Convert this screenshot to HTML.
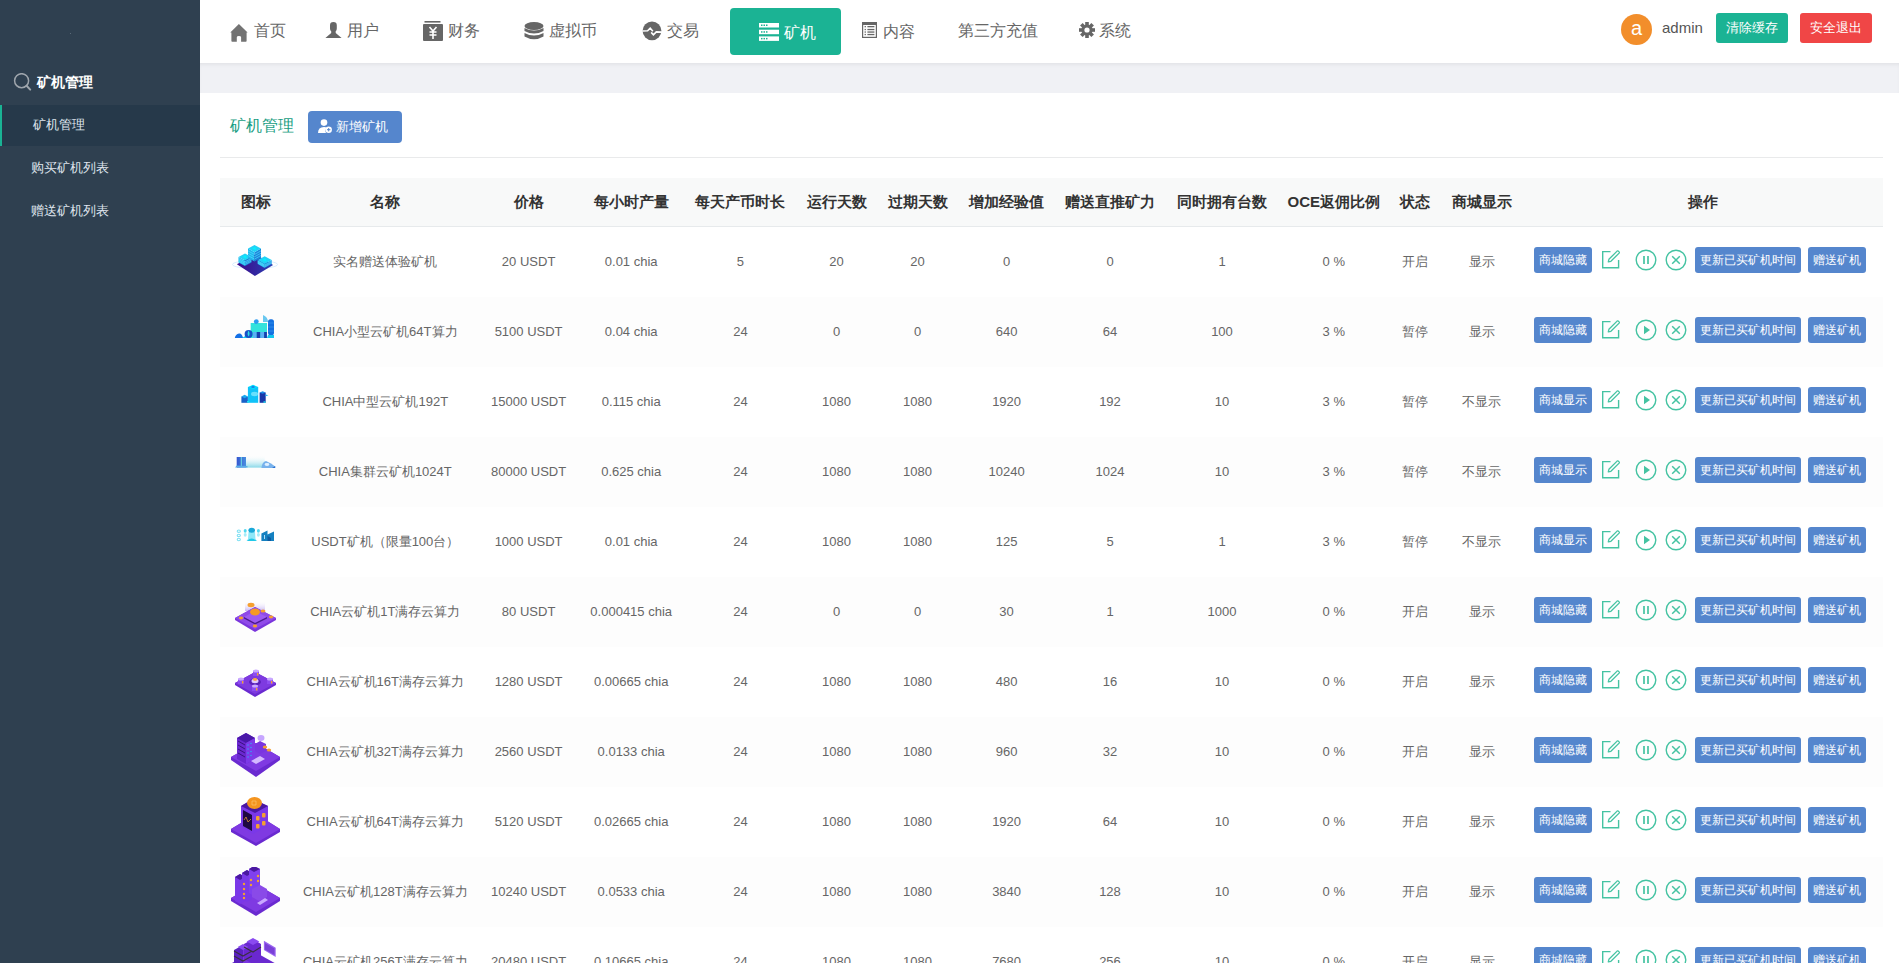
<!DOCTYPE html>
<html><head><meta charset="utf-8">
<style>
*{margin:0;padding:0;box-sizing:border-box}
html,body{width:1899px;height:963px;overflow:hidden;background:#fff;font-family:"Liberation Sans",sans-serif;}
#side{position:absolute;left:0;top:0;width:200px;height:963px;background:#2f4050;}
#side .hd{position:absolute;left:0;top:62px;width:200px;height:40px;color:#fff;font-weight:bold;font-size:14px;}
#side .hd svg{position:absolute;left:13px;top:11px}
#side .hd span{position:absolute;left:37px;top:11px;line-height:18px}
#side .it{position:absolute;left:0;width:200px;height:41px;color:#dfe4ed;font-size:13px;}
#side .it span{position:absolute;top:12px;line-height:16px}
#side .act{background:#26394a;border-left:2px solid #1ab394}
#top{position:absolute;left:200px;top:0;width:1699px;height:63px;background:#fff;}
#band{position:absolute;left:200px;top:63px;width:1699px;height:30px;background:#f0f1f5;box-shadow:inset 0 3px 4px -2px rgba(0,0,0,.08)}
.nv{position:absolute;top:22px;height:20px;color:#666;font-size:16px;line-height:18px;white-space:nowrap}
.nv svg{position:absolute;}
.nv span{position:absolute;top:0}
#act{position:absolute;left:730px;top:8px;width:111px;height:47px;background:#1bb394;border-radius:4px}
#avatar{position:absolute;left:1621px;top:14px;width:31px;height:31px;border-radius:50%;background:#f28e2b;color:#fff;font-size:20px;line-height:28px;text-align:center}
#uname{position:absolute;left:1662px;top:18px;color:#555;font-size:15px;line-height:20px}
.tbtn{position:absolute;top:13px;width:72px;height:30px;border-radius:3px;color:#fff;font-size:13px;line-height:30px;text-align:center}

#content{position:absolute;left:200px;top:93px;width:1699px;height:870px;background:#fff}
#ttl{position:absolute;left:230px;top:116px;color:#179d82;font-size:16px;line-height:20px}
#addbtn{position:absolute;left:308px;top:111px;width:94px;height:32px;background:#5586cd;border-radius:4px;color:#fff;font-size:13px;line-height:32px}
#addbtn span{position:absolute;left:28px;top:0}
#addbtn svg{position:absolute;left:10px;top:8px}
#hline{position:absolute;left:220px;top:157px;width:1663px;height:1px;background:#e9eaeb}
#thead{position:absolute;left:220px;top:178px;width:1663px;height:48px;background:#f8f9f9;border-bottom:1px solid #e7eaec;box-sizing:content-box}
.th{position:absolute;top:193px;width:300px;text-align:center;color:#333;font-weight:bold;font-size:15px;line-height:18px;white-space:nowrap}
.row{position:absolute;left:220px;width:1663px;height:70px}
.row.s{background:#fdfdfd}
.td{position:absolute;width:300px;text-align:center;color:#666;font-size:13px;line-height:18px;white-space:nowrap}
.ab{position:absolute;height:26px;background:#5586cd;border-radius:3px;color:#fff;font-size:12px;line-height:26px;text-align:center;white-space:nowrap}
.ic{position:absolute}
</style></head><body>

<div id="side"><div style="position:absolute;left:70px;top:33px;width:1px;height:1px;background:#5a6a78"></div>
  <div class="hd"><svg width="20" height="20" viewBox="0 0 20 20"><circle cx="8.6" cy="7.7" r="7" fill="none" stroke="#9fa6ad" stroke-width="1.5"/><line x1="13.6" y1="12.8" x2="17.2" y2="16.6" stroke="#9fa6ad" stroke-width="2" stroke-linecap="round"/></svg><span>矿机管理</span></div>
  <div class="it act" style="top:105px"><span style="left:31px">矿机管理</span></div>
  <div class="it" style="top:148px"><span style="left:31px">购买矿机列表</span></div>
  <div class="it" style="top:191px"><span style="left:31px">赠送矿机列表</span></div>
</div>

<div id="top">
</div>
<div id="act"></div>
<div class="nv" style="left:230px"><svg style="left:0;top:2px" width="18" height="18" viewBox="0 0 18 18"><path d="M8.9 0 L17.6 8.5 L16.6 8.5 L16.6 16.9 Q16.6 17.7 15.8 17.7 L11.1 17.7 L11.1 13.2 Q11.1 11.9 8.95 11.9 Q6.8 11.9 6.8 13.2 L6.8 17.7 L2.2 17.7 Q1.4 17.7 1.4 16.9 L1.4 8.5 L0.3 8.5 Z" fill="#737373"/></svg><span style="left:24px">首页</span></div>
<div class="nv" style="left:325px"><svg style="left:0;top:0" width="17" height="17" viewBox="0 0 17 17"><path d="M5 3.2 Q5 0 8.4 0 Q11.8 0 11.8 3.2 L11.8 6.5 Q11.8 8.6 10.7 9.2 L10.7 11 L16.6 15.9 L0.4 15.9 L6.2 11 L6.2 9.2 Q5 8.6 5 6.5 Z" fill="#666"/></svg><span style="left:22px">用户</span></div>
<div class="nv" style="left:423px"><svg style="left:0;top:-1px" width="20" height="20" viewBox="0 0 20 20"><rect x="1.5" y="0" width="16" height="1.6" fill="#666"/><rect x="0" y="3" width="20" height="17" rx="1" fill="#666"/><path d="M6.5 6 L10 10 L13.5 6 M6.5 11 H13.5 M6.5 14 H13.5 M10 10 V18" stroke="#fff" stroke-width="1.6" fill="none"/></svg><span style="left:25px">财务</span></div>
<div class="nv" style="left:524px"><svg style="left:0;top:0" width="20" height="19" viewBox="0 0 20 19"><ellipse cx="10" cy="4" rx="9.5" ry="4" fill="#666"/><path d="M0.5 6 Q10 11 19.5 6 V9 Q10 14 0.5 9 Z" fill="#666"/><path d="M0.5 11 Q10 16 19.5 11 V14.5 Q10 20 0.5 14.5 Z" fill="#666"/></svg><span style="left:25px">虚拟币</span></div>
<div class="nv" style="left:642px"><svg style="left:0;top:-1px" width="20" height="20" viewBox="0 0 20 20"><circle cx="10" cy="9.8" r="9.4" fill="#666"/><path d="M0.3 10 L5.6 9.8 L8.2 7.2 L10.9 10.2 M9.2 11.4 L11.4 13.8 L14.3 10.9 L19.8 11.1" stroke="#fff" stroke-width="1.6" fill="none"/></svg><span style="left:25px">交易</span></div>
<div class="nv" style="left:759px;color:#fff"><svg style="left:0;top:1px" width="20" height="18" viewBox="0 0 20 18"><rect x="0" y="0" width="20" height="4.5" fill="#fff"/><rect x="0" y="6.7" width="20" height="4.5" fill="#fff"/><rect x="0" y="13.4" width="20" height="4.5" fill="#fff"/><g fill="#1bb394"><rect x="2" y="1.5" width="1.5" height="1.5"/><rect x="4.5" y="1.5" width="1.5" height="1.5"/><rect x="7" y="1.5" width="1.5" height="1.5"/><rect x="2" y="8.2" width="1.5" height="1.5"/><rect x="4.5" y="8.2" width="1.5" height="1.5"/><rect x="7" y="8.2" width="1.5" height="1.5"/><rect x="2" y="14.9" width="1.5" height="1.5"/><rect x="4.5" y="14.9" width="1.5" height="1.5"/><rect x="7" y="14.9" width="1.5" height="1.5"/></g></svg><span style="left:25px;top:2px">矿机</span></div>
<div class="nv" style="left:862px"><svg style="left:0;top:0" width="15" height="16" viewBox="0 0 15 16"><rect x="0.6" y="0.6" width="13.8" height="14.8" fill="none" stroke="#666" stroke-width="1.2"/><rect x="0" y="0" width="15" height="3" fill="#666"/><rect x="2.6" y="3.9999999999999996" width="1.3" height="1.3" fill="#666"/><rect x="5.4" y="3.9999999999999996" width="7" height="1.3" fill="#666"/><rect x="2.6" y="6.9" width="1.3" height="1.3" fill="#666"/><rect x="5.4" y="6.9" width="7" height="1.3" fill="#666"/><rect x="2.6" y="9.4" width="1.3" height="1.3" fill="#666"/><rect x="5.4" y="9.4" width="7" height="1.3" fill="#666"/><rect x="2.6" y="11.9" width="1.3" height="1.3" fill="#666"/><rect x="5.4" y="11.9" width="7" height="1.3" fill="#666"/></svg><span style="left:21px;top:1px">内容</span></div>
<div class="nv" style="left:958px"><span style="left:0">第三方充值</span></div>
<div class="nv" style="left:1079px"><svg style="left:0;top:0" width="16" height="16" viewBox="0 0 16 16"><g transform="translate(8 8)" fill="#666"><circle r="5.6"/><rect x="-1.8" y="-8" width="3.6" height="16"/><rect x="-1.8" y="-8" width="3.6" height="16" transform="rotate(45)"/><rect x="-1.8" y="-8" width="3.6" height="16" transform="rotate(90)"/><rect x="-1.8" y="-8" width="3.6" height="16" transform="rotate(135)"/></g><circle cx="8" cy="8" r="2.6" fill="#fff"/></svg><span style="left:20px">系统</span></div>
<div id="avatar">a</div>
<div id="uname">admin</div>
<div class="tbtn" style="left:1716px;background:#1bb394">清除缓存</div>
<div class="tbtn" style="left:1800px;background:#f04646">安全退出</div>

<div id="band"></div>

<div id="content"></div>
<div id="ttl">矿机管理</div>
<div id="addbtn"><svg width="14" height="14" viewBox="0 0 14 14"><circle cx="6" cy="3.6" r="3.3" fill="#fff"/><path d="M0 14 Q0 8 6 8 Q8 8 9 9 A4 4 0 0 0 8 14Z" fill="#fff"/><circle cx="10.7" cy="10.7" r="3.2" fill="#fff"/><path d="M9 10.7 H12.4 M10.7 9 V12.4" stroke="#5586cd" stroke-width="1"/></svg><span>新增矿机</span></div>
<div id="hline"></div>
<div id="thead"></div>
<div class="th" style="left:105.5px">图标</div>
<div class="th" style="left:235.3px">名称</div>
<div class="th" style="left:378.6px">价格</div>
<div class="th" style="left:481.20000000000005px">每小时产量</div>
<div class="th" style="left:590.4px">每天产币时长</div>
<div class="th" style="left:686.5px">运行天数</div>
<div class="th" style="left:767.5px">过期天数</div>
<div class="th" style="left:856.6px">增加经验值</div>
<div class="th" style="left:960px">赠送直推矿力</div>
<div class="th" style="left:1072px">同时拥有台数</div>
<div class="th" style="left:1183.8px">OCE返佣比例</div>
<div class="th" style="left:1265.3px">状态</div>
<div class="th" style="left:1331.6px">商城显示</div>
<div class="th" style="left:1552.5px">操作</div>
<div class="row" style="top:227px"></div>
<svg style="position:absolute;left:230px;top:244px" width="50" height="34" viewBox="0 0 50 34"><defs><linearGradient id="p1" x1="0" y1="0" x2="1" y2="0"><stop offset="0" stop-color="#3c0a8a"/><stop offset="1" stop-color="#2a40b4"/></linearGradient></defs><ellipse cx="25" cy="20.5" rx="22.5" ry="4" fill="none" stroke="#cfe9ff" stroke-width="0.8"/><path d="M6.9 20.2 L24.9 31.9 L43.1 21.1 L25 10 Z" fill="url(#p1)"/><path d="M8.5 12.975000000000001 L15 16.55 L15 22 L8.5 18.425 Z" fill="#1fb6ee"/><path d="M15 16.55 L21.5 12.975000000000001 L21.5 18.425 L15 22 Z" fill="#1a86dc"/><path d="M8.5 14.337500000000002 L15 17.9125 L21.5 14.337500000000002" fill="none" stroke="#5fe6ff" stroke-width="0.7" opacity=".8"/><path d="M8.5 15.700000000000001 L15 19.275 L21.5 15.700000000000001" fill="none" stroke="#5fe6ff" stroke-width="0.7" opacity=".8"/><path d="M8.5 17.0625 L15 20.6375 L21.5 17.0625" fill="none" stroke="#5fe6ff" stroke-width="0.7" opacity=".8"/><path d="M8.5 12.975000000000001 L15 9.4 L21.5 12.975000000000001 L15 16.55 Z" fill="#22d2f6"/><path d="M12.725 12.975000000000001 L15.65 11.36625 L16.625 14.405000000000001 Z" fill="#00f4ff"/><path d="M18.0 4.575 L24.5 8.15 L24.5 17.4 L18.0 13.825 Z" fill="#1fb6ee"/><path d="M24.5 8.15 L31.0 4.575 L31.0 13.825 L24.5 17.4 Z" fill="#1a86dc"/><path d="M18.0 6.887499999999999 L24.5 10.4625 L31.0 6.887499999999999" fill="none" stroke="#5fe6ff" stroke-width="0.7" opacity=".8"/><path d="M18.0 9.2 L24.5 12.774999999999999 L31.0 9.2" fill="none" stroke="#5fe6ff" stroke-width="0.7" opacity=".8"/><path d="M18.0 11.5125 L24.5 15.087499999999999 L31.0 11.5125" fill="none" stroke="#5fe6ff" stroke-width="0.7" opacity=".8"/><path d="M18.0 4.575 L24.5 1 L31.0 4.575 L24.5 8.15 Z" fill="#22d2f6"/><path d="M22.225 4.575 L25.15 2.9662500000000005 L26.125 6.005000000000001 Z" fill="#00f4ff"/><path d="M27.700000000000003 16.05 L34.7 19.9 L34.7 23.9 L27.700000000000003 20.049999999999997 Z" fill="#1fb6ee"/><path d="M34.7 19.9 L41.7 16.05 L41.7 20.049999999999997 L34.7 23.9 Z" fill="#1a86dc"/><path d="M27.700000000000003 17.05 L34.7 20.9 L41.7 17.05" fill="none" stroke="#5fe6ff" stroke-width="0.7" opacity=".8"/><path d="M27.700000000000003 18.05 L34.7 21.9 L41.7 18.05" fill="none" stroke="#5fe6ff" stroke-width="0.7" opacity=".8"/><path d="M27.700000000000003 19.05 L34.7 22.9 L41.7 19.05" fill="none" stroke="#5fe6ff" stroke-width="0.7" opacity=".8"/><path d="M27.700000000000003 16.05 L34.7 12.2 L41.7 16.05 L34.7 19.9 Z" fill="#22d2f6"/><path d="M32.25 16.05 L35.400000000000006 14.317499999999999 L36.45 17.59 Z" fill="#00f4ff"/></svg>
<div class="td" style="left:235.3px;top:253px">实名赠送体验矿机</div>
<div class="td" style="left:378.6px;top:253px">20 USDT</div>
<div class="td" style="left:481.20000000000005px;top:253px">0.01 chia</div>
<div class="td" style="left:590.4px;top:253px">5</div>
<div class="td" style="left:686.5px;top:253px">20</div>
<div class="td" style="left:767.5px;top:253px">20</div>
<div class="td" style="left:856.6px;top:253px">0</div>
<div class="td" style="left:960px;top:253px">0</div>
<div class="td" style="left:1072px;top:253px">1</div>
<div class="td" style="left:1183.8px;top:253px">0 %</div>
<div class="td" style="left:1265.3px;top:253px">开启</div>
<div class="td" style="left:1331.6px;top:253px">显示</div>
<div class="ab" style="left:1534px;top:247px;width:58px">商城隐藏</div>
<svg class="ic" style="left:1601px;top:250px" width="19" height="19" viewBox="0 0 19 19"><path d="M9.5 1.6 H1.7 V17.8 H17.6 V10" fill="none" stroke="#45c3a2" stroke-width="1.4"/><path d="M7.3 11.8 L7.9 9.3 L16.1 1.1 Q16.7 0.6 17.3 1.1 L18.1 1.9 Q18.6 2.5 18.1 3.1 L9.9 11.3 Z" fill="none" stroke="#45c3a2" stroke-width="1.3" stroke-linejoin="round"/></svg>
<svg class="ic" style="left:1635px;top:249px" width="22" height="22" viewBox="0 0 22 22"><circle cx="11" cy="11" r="9.8" fill="none" stroke="#45c3a2" stroke-width="1.4"/><path d="M9 7 V15 M13 7 V15" stroke="#45c3a2" stroke-width="1.7"/></svg>
<svg class="ic" style="left:1665px;top:249px" width="22" height="22" viewBox="0 0 22 22"><circle cx="11" cy="11" r="9.8" fill="none" stroke="#45c3a2" stroke-width="1.4"/><path d="M7.2 7.2 L14.8 14.8 M14.8 7.2 L7.2 14.8" stroke="#45c3a2" stroke-width="1.5"/></svg>
<div class="ab" style="left:1695px;top:247px;width:106px">更新已买矿机时间</div>
<div class="ab" style="left:1808px;top:247px;width:58px">赠送矿机</div>
<div class="row s" style="top:297px"></div>
<svg style="position:absolute;left:234px;top:314px" width="42" height="26" viewBox="0 0 42 26"><path d="M8 24 L33 24 L33 10 Q30 14 24 14 Z" fill="#14c8ee"/>
<path d="M0.8 24 Q1.5 20 5 19.5 Q8 19 9 24 Z" fill="#1470e6"/>
<rect x="16.7" y="9" width="16.3" height="15" fill="#34e2dc"/>
<circle cx="22.3" cy="7.6" r="2.4" fill="#2f9cf0"/>
<circle cx="14.6" cy="20" r="4" fill="#1850c8"/><path d="M14.6 16.5 Q16.5 20 14.6 22.5 Q12.7 20 14.6 16.5Z" fill="#30dce0"/>
<rect x="19" y="18" width="3.7" height="6" fill="#5ab0f5"/><rect x="22.7" y="18" width="3.7" height="6" fill="#1840b0"/><rect x="26.4" y="18" width="3.7" height="6" fill="#5ab0f5"/><rect x="30.1" y="18" width="2.8" height="6" fill="#1840b0"/>
<path d="M29 1 Q34 3 34 8 L29 8 Z" fill="#6ac8f0"/>
<rect x="34" y="5.2" width="6" height="16" rx="2.5" fill="#1470e0"/><path d="M34 9 H40 M34 13 H40 M34 17 H40" stroke="#3aa0f0" stroke-width=".6"/>
<path d="M33 24 L40 24 L40 21 L34 21 Z" fill="#12c6ee"/></svg>
<div class="td" style="left:235.3px;top:323px">CHIA小型云矿机64T算力</div>
<div class="td" style="left:378.6px;top:323px">5100 USDT</div>
<div class="td" style="left:481.20000000000005px;top:323px">0.04 chia</div>
<div class="td" style="left:590.4px;top:323px">24</div>
<div class="td" style="left:686.5px;top:323px">0</div>
<div class="td" style="left:767.5px;top:323px">0</div>
<div class="td" style="left:856.6px;top:323px">640</div>
<div class="td" style="left:960px;top:323px">64</div>
<div class="td" style="left:1072px;top:323px">100</div>
<div class="td" style="left:1183.8px;top:323px">3 %</div>
<div class="td" style="left:1265.3px;top:323px">暂停</div>
<div class="td" style="left:1331.6px;top:323px">显示</div>
<div class="ab" style="left:1534px;top:317px;width:58px">商城隐藏</div>
<svg class="ic" style="left:1601px;top:320px" width="19" height="19" viewBox="0 0 19 19"><path d="M9.5 1.6 H1.7 V17.8 H17.6 V10" fill="none" stroke="#45c3a2" stroke-width="1.4"/><path d="M7.3 11.8 L7.9 9.3 L16.1 1.1 Q16.7 0.6 17.3 1.1 L18.1 1.9 Q18.6 2.5 18.1 3.1 L9.9 11.3 Z" fill="none" stroke="#45c3a2" stroke-width="1.3" stroke-linejoin="round"/></svg>
<svg class="ic" style="left:1635px;top:319px" width="22" height="22" viewBox="0 0 22 22"><circle cx="11" cy="11" r="9.8" fill="none" stroke="#45c3a2" stroke-width="1.4"/><path d="M9 6.8 L15 11 L9 15.2 Z" fill="#45c3a2"/></svg>
<svg class="ic" style="left:1665px;top:319px" width="22" height="22" viewBox="0 0 22 22"><circle cx="11" cy="11" r="9.8" fill="none" stroke="#45c3a2" stroke-width="1.4"/><path d="M7.2 7.2 L14.8 14.8 M14.8 7.2 L7.2 14.8" stroke="#45c3a2" stroke-width="1.5"/></svg>
<div class="ab" style="left:1695px;top:317px;width:106px">更新已买矿机时间</div>
<div class="ab" style="left:1808px;top:317px;width:58px">赠送矿机</div>
<div class="row" style="top:367px"></div>
<svg style="position:absolute;left:240px;top:384px" width="29" height="20" viewBox="0 0 29 20"><rect x="1.4" y="12.5" width="6.5" height="6.3" fill="#1a62c8"/><path d="M1.4 12.5 L4.6 10.8 L7.9 12.5 L4.6 14.2Z" fill="#1aa8f0"/>
<rect x="7.9" y="3" width="10.3" height="15.8" fill="#10c2f8"/><path d="M7.9 3 L13 0.8 L18.2 3 L13 5.2Z" fill="#00dcff"/><ellipse cx="13" cy="2.9" rx="1.8" ry="1" fill="#1a80e8"/>
<ellipse cx="14.5" cy="10" rx="3.5" ry="2.2" fill="#90ecff" opacity=".7"/>
<rect x="19.6" y="8.5" width="6.1" height="10.3" fill="#1a38a8"/><path d="M19.6 8.5 L22.6 7.2 L25.7 8.5 L22.6 9.8Z" fill="#1a8ae8"/><path d="M25.5 10.5 L28.5 11.3 L25.5 12.3Z" fill="#19b8f0"/>
<rect x="7" y="17" width="2" height="1.5" fill="#20e0f0"/><rect x="23.5" y="17.3" width="2" height="1.5" fill="#20e0f0"/></svg>
<div class="td" style="left:235.3px;top:393px">CHIA中型云矿机192T</div>
<div class="td" style="left:378.6px;top:393px">15000 USDT</div>
<div class="td" style="left:481.20000000000005px;top:393px">0.115 chia</div>
<div class="td" style="left:590.4px;top:393px">24</div>
<div class="td" style="left:686.5px;top:393px">1080</div>
<div class="td" style="left:767.5px;top:393px">1080</div>
<div class="td" style="left:856.6px;top:393px">1920</div>
<div class="td" style="left:960px;top:393px">192</div>
<div class="td" style="left:1072px;top:393px">10</div>
<div class="td" style="left:1183.8px;top:393px">3 %</div>
<div class="td" style="left:1265.3px;top:393px">暂停</div>
<div class="td" style="left:1331.6px;top:393px">不显示</div>
<div class="ab" style="left:1534px;top:387px;width:58px">商城显示</div>
<svg class="ic" style="left:1601px;top:390px" width="19" height="19" viewBox="0 0 19 19"><path d="M9.5 1.6 H1.7 V17.8 H17.6 V10" fill="none" stroke="#45c3a2" stroke-width="1.4"/><path d="M7.3 11.8 L7.9 9.3 L16.1 1.1 Q16.7 0.6 17.3 1.1 L18.1 1.9 Q18.6 2.5 18.1 3.1 L9.9 11.3 Z" fill="none" stroke="#45c3a2" stroke-width="1.3" stroke-linejoin="round"/></svg>
<svg class="ic" style="left:1635px;top:389px" width="22" height="22" viewBox="0 0 22 22"><circle cx="11" cy="11" r="9.8" fill="none" stroke="#45c3a2" stroke-width="1.4"/><path d="M9 6.8 L15 11 L9 15.2 Z" fill="#45c3a2"/></svg>
<svg class="ic" style="left:1665px;top:389px" width="22" height="22" viewBox="0 0 22 22"><circle cx="11" cy="11" r="9.8" fill="none" stroke="#45c3a2" stroke-width="1.4"/><path d="M7.2 7.2 L14.8 14.8 M14.8 7.2 L7.2 14.8" stroke="#45c3a2" stroke-width="1.5"/></svg>
<div class="ab" style="left:1695px;top:387px;width:106px">更新已买矿机时间</div>
<div class="ab" style="left:1808px;top:387px;width:58px">赠送矿机</div>
<div class="row s" style="top:437px"></div>
<svg style="position:absolute;left:234px;top:455px" width="42" height="14" viewBox="0 0 42 14"><defs><linearGradient id="g4" x1="0" y1="0" x2="0" y2="1"><stop offset="0" stop-color="#fff" stop-opacity="0"/><stop offset="1" stop-color="#88d8e8"/></linearGradient>
<linearGradient id="b4" x1="0" y1="0" x2="1" y2="0"><stop offset="0" stop-color="#3456d0"/><stop offset="1" stop-color="#4a90e0"/></linearGradient></defs>
<rect x="12" y="0" width="18.7" height="12.6" fill="url(#g4)"/>
<rect x="2.7" y="2" width="9.3" height="10.6" fill="url(#b4)"/><rect x="6.8" y="2" width="1" height="10.6" fill="#70e0e0"/>
<path d="M1 12.6 L2.7 10.5 L13.5 11 L13.5 12.6Z" fill="#5aaee8"/>
<path d="M27.4 12.9 Q28 7 32 6 L37 8.5 L41.2 11.5 L41.2 12.9Z" fill="#78b2ec"/><ellipse cx="33" cy="9.5" rx="2.4" ry="1.4" fill="#e0f0ff"/><path d="M38 12.9 L41.2 11 L41.2 12.9Z" fill="#2a70d0"/></svg>
<div class="td" style="left:235.3px;top:463px">CHIA集群云矿机1024T</div>
<div class="td" style="left:378.6px;top:463px">80000 USDT</div>
<div class="td" style="left:481.20000000000005px;top:463px">0.625 chia</div>
<div class="td" style="left:590.4px;top:463px">24</div>
<div class="td" style="left:686.5px;top:463px">1080</div>
<div class="td" style="left:767.5px;top:463px">1080</div>
<div class="td" style="left:856.6px;top:463px">10240</div>
<div class="td" style="left:960px;top:463px">1024</div>
<div class="td" style="left:1072px;top:463px">10</div>
<div class="td" style="left:1183.8px;top:463px">3 %</div>
<div class="td" style="left:1265.3px;top:463px">暂停</div>
<div class="td" style="left:1331.6px;top:463px">不显示</div>
<div class="ab" style="left:1534px;top:457px;width:58px">商城显示</div>
<svg class="ic" style="left:1601px;top:460px" width="19" height="19" viewBox="0 0 19 19"><path d="M9.5 1.6 H1.7 V17.8 H17.6 V10" fill="none" stroke="#45c3a2" stroke-width="1.4"/><path d="M7.3 11.8 L7.9 9.3 L16.1 1.1 Q16.7 0.6 17.3 1.1 L18.1 1.9 Q18.6 2.5 18.1 3.1 L9.9 11.3 Z" fill="none" stroke="#45c3a2" stroke-width="1.3" stroke-linejoin="round"/></svg>
<svg class="ic" style="left:1635px;top:459px" width="22" height="22" viewBox="0 0 22 22"><circle cx="11" cy="11" r="9.8" fill="none" stroke="#45c3a2" stroke-width="1.4"/><path d="M9 6.8 L15 11 L9 15.2 Z" fill="#45c3a2"/></svg>
<svg class="ic" style="left:1665px;top:459px" width="22" height="22" viewBox="0 0 22 22"><circle cx="11" cy="11" r="9.8" fill="none" stroke="#45c3a2" stroke-width="1.4"/><path d="M7.2 7.2 L14.8 14.8 M14.8 7.2 L7.2 14.8" stroke="#45c3a2" stroke-width="1.5"/></svg>
<div class="ab" style="left:1695px;top:457px;width:106px">更新已买矿机时间</div>
<div class="ab" style="left:1808px;top:457px;width:58px">赠送矿机</div>
<div class="row" style="top:507px"></div>
<svg style="position:absolute;left:236px;top:527px" width="38" height="15" viewBox="0 0 38 15"><g fill="none" stroke="#7fe0f3" stroke-width="1.1"><ellipse cx="2.8" cy="4.2" rx="1.6" ry="1.2"/><ellipse cx="2.8" cy="8.4" rx="1.6" ry="1.2"/><ellipse cx="2.8" cy="12.5" rx="1.6" ry="1.2"/></g>
<g fill="#52d8f0"><ellipse cx="9.2" cy="3.8" rx="1.5" ry="1.9"/><ellipse cx="22.4" cy="3.8" rx="1.5" ry="1.9"/></g>
<g fill="#a6ecf8"><ellipse cx="9.2" cy="7.8" rx="1.5" ry="1.9"/><ellipse cx="22.4" cy="7.8" rx="1.5" ry="1.9"/></g>
<path d="M12.5 5 L19 5 L19.5 12 L21 13.9 L10.5 13.9 L12 12Z" fill="#8ee8f8"/><path d="M11 13.9 Q15.7 9 20.5 13.9Z" fill="#20c8e8"/>
<ellipse cx="15.7" cy="3.2" rx="3.3" ry="2.5" fill="#1aa8d8"/>
<path d="M25.4 6.5 L31.5 3.6 L31.5 7.5 L38 4.5 L38 13.9 L25.4 13.9Z" fill="#1480c0"/><rect x="28" y="8" width="0.9" height="4" fill="#bfe8ff"/><path d="M31.5 13.9 L31.5 9 L35 11 L35 13.9Z" fill="#0e5aa0"/></svg>
<div class="td" style="left:235.3px;top:533px">USDT矿机（限量100台）</div>
<div class="td" style="left:378.6px;top:533px">1000 USDT</div>
<div class="td" style="left:481.20000000000005px;top:533px">0.01 chia</div>
<div class="td" style="left:590.4px;top:533px">24</div>
<div class="td" style="left:686.5px;top:533px">1080</div>
<div class="td" style="left:767.5px;top:533px">1080</div>
<div class="td" style="left:856.6px;top:533px">125</div>
<div class="td" style="left:960px;top:533px">5</div>
<div class="td" style="left:1072px;top:533px">1</div>
<div class="td" style="left:1183.8px;top:533px">3 %</div>
<div class="td" style="left:1265.3px;top:533px">暂停</div>
<div class="td" style="left:1331.6px;top:533px">不显示</div>
<div class="ab" style="left:1534px;top:527px;width:58px">商城显示</div>
<svg class="ic" style="left:1601px;top:530px" width="19" height="19" viewBox="0 0 19 19"><path d="M9.5 1.6 H1.7 V17.8 H17.6 V10" fill="none" stroke="#45c3a2" stroke-width="1.4"/><path d="M7.3 11.8 L7.9 9.3 L16.1 1.1 Q16.7 0.6 17.3 1.1 L18.1 1.9 Q18.6 2.5 18.1 3.1 L9.9 11.3 Z" fill="none" stroke="#45c3a2" stroke-width="1.3" stroke-linejoin="round"/></svg>
<svg class="ic" style="left:1635px;top:529px" width="22" height="22" viewBox="0 0 22 22"><circle cx="11" cy="11" r="9.8" fill="none" stroke="#45c3a2" stroke-width="1.4"/><path d="M9 6.8 L15 11 L9 15.2 Z" fill="#45c3a2"/></svg>
<svg class="ic" style="left:1665px;top:529px" width="22" height="22" viewBox="0 0 22 22"><circle cx="11" cy="11" r="9.8" fill="none" stroke="#45c3a2" stroke-width="1.4"/><path d="M7.2 7.2 L14.8 14.8 M14.8 7.2 L7.2 14.8" stroke="#45c3a2" stroke-width="1.5"/></svg>
<div class="ab" style="left:1695px;top:527px;width:106px">更新已买矿机时间</div>
<div class="ab" style="left:1808px;top:527px;width:58px">赠送矿机</div>
<div class="row s" style="top:577px"></div>
<svg style="position:absolute;left:234px;top:599px" width="43" height="34" viewBox="0 0 43 34"><defs><linearGradient id="g6" x1="0" y1="0" x2="0" y2="1"><stop offset="0" stop-color="#fff" stop-opacity="0"/><stop offset="1" stop-color="#c9b6f5"/></linearGradient></defs>
<rect x="11" y="2" width="20" height="10" fill="url(#g6)"/>
<path d="M1 19 L21 8 L42 19 L42 21 L21 33 L1 21Z" fill="#7a35dc"/>
<path d="M1 19 L21 8 L42 19 L21 30Z" fill="#8f4ae8"/>
<path d="M10 18 L21 12 L33 18 L21 24Z" fill="#9d5af2"/><path d="M10 18 L21 24 L33 18 L33 19.5 L21 25.5 L10 19.5Z" fill="#4a1a90"/>
<ellipse cx="7" cy="19" rx="2.2" ry="1.4" fill="#f5a030"/><ellipse cx="37" cy="18" rx="2.2" ry="1.4" fill="#f5a030"/><ellipse cx="21" cy="27" rx="2.2" ry="1.4" fill="#f5a030"/>
<ellipse cx="21" cy="13" rx="5" ry="3.5" fill="#f59a25"/><ellipse cx="17" cy="6" rx="3.5" ry="2.2" fill="#f5a030"/><ellipse cx="29" cy="12" rx="2.5" ry="1.6" fill="#f5a030"/></svg>
<div class="td" style="left:235.3px;top:603px">CHIA云矿机1T满存云算力</div>
<div class="td" style="left:378.6px;top:603px">80 USDT</div>
<div class="td" style="left:481.20000000000005px;top:603px">0.000415 chia</div>
<div class="td" style="left:590.4px;top:603px">24</div>
<div class="td" style="left:686.5px;top:603px">0</div>
<div class="td" style="left:767.5px;top:603px">0</div>
<div class="td" style="left:856.6px;top:603px">30</div>
<div class="td" style="left:960px;top:603px">1</div>
<div class="td" style="left:1072px;top:603px">1000</div>
<div class="td" style="left:1183.8px;top:603px">0 %</div>
<div class="td" style="left:1265.3px;top:603px">开启</div>
<div class="td" style="left:1331.6px;top:603px">显示</div>
<div class="ab" style="left:1534px;top:597px;width:58px">商城隐藏</div>
<svg class="ic" style="left:1601px;top:600px" width="19" height="19" viewBox="0 0 19 19"><path d="M9.5 1.6 H1.7 V17.8 H17.6 V10" fill="none" stroke="#45c3a2" stroke-width="1.4"/><path d="M7.3 11.8 L7.9 9.3 L16.1 1.1 Q16.7 0.6 17.3 1.1 L18.1 1.9 Q18.6 2.5 18.1 3.1 L9.9 11.3 Z" fill="none" stroke="#45c3a2" stroke-width="1.3" stroke-linejoin="round"/></svg>
<svg class="ic" style="left:1635px;top:599px" width="22" height="22" viewBox="0 0 22 22"><circle cx="11" cy="11" r="9.8" fill="none" stroke="#45c3a2" stroke-width="1.4"/><path d="M9 7 V15 M13 7 V15" stroke="#45c3a2" stroke-width="1.7"/></svg>
<svg class="ic" style="left:1665px;top:599px" width="22" height="22" viewBox="0 0 22 22"><circle cx="11" cy="11" r="9.8" fill="none" stroke="#45c3a2" stroke-width="1.4"/><path d="M7.2 7.2 L14.8 14.8 M14.8 7.2 L7.2 14.8" stroke="#45c3a2" stroke-width="1.5"/></svg>
<div class="ab" style="left:1695px;top:597px;width:106px">更新已买矿机时间</div>
<div class="ab" style="left:1808px;top:597px;width:58px">赠送矿机</div>
<div class="row" style="top:647px"></div>
<svg style="position:absolute;left:234px;top:666px" width="43" height="32" viewBox="0 0 43 32"><path d="M1 17 L21 6 L42 17 L42 19 L21 31 L1 19Z" fill="#6a2ad0"/>
<path d="M1 17 L21 6 L42 17 L21 28Z" fill="#7e3ae0"/>
<ellipse cx="21" cy="16" rx="6" ry="3.5" fill="#5a20b8"/><ellipse cx="21" cy="15" rx="3.5" ry="2.2" fill="#e0c8ff"/><ellipse cx="21" cy="13.5" rx="2.2" ry="1.4" fill="#f5a84a"/>
<g fill="#8d4cf0"><rect x="19" y="5" width="6" height="5"/><rect x="4" y="13" width="6" height="5"/><rect x="33" y="13" width="6" height="5"/><rect x="18" y="20" width="6" height="5"/></g>
<g fill="#c9a8ff"><ellipse cx="22" cy="5" rx="3" ry="1.5"/><ellipse cx="7" cy="13" rx="3" ry="1.5"/><ellipse cx="36" cy="13" rx="3" ry="1.5"/><ellipse cx="21" cy="20" rx="3" ry="1.5"/></g>
<g fill="#f5a030"><rect x="23" y="7" width="1.3" height="2.5"/><rect x="8" y="15" width="1.3" height="2.5"/><rect x="37" y="15" width="1.3" height="2.5"/><rect x="22" y="22" width="1.3" height="2.5"/></g></svg>
<div class="td" style="left:235.3px;top:673px">CHIA云矿机16T满存云算力</div>
<div class="td" style="left:378.6px;top:673px">1280 USDT</div>
<div class="td" style="left:481.20000000000005px;top:673px">0.00665 chia</div>
<div class="td" style="left:590.4px;top:673px">24</div>
<div class="td" style="left:686.5px;top:673px">1080</div>
<div class="td" style="left:767.5px;top:673px">1080</div>
<div class="td" style="left:856.6px;top:673px">480</div>
<div class="td" style="left:960px;top:673px">16</div>
<div class="td" style="left:1072px;top:673px">10</div>
<div class="td" style="left:1183.8px;top:673px">0 %</div>
<div class="td" style="left:1265.3px;top:673px">开启</div>
<div class="td" style="left:1331.6px;top:673px">显示</div>
<div class="ab" style="left:1534px;top:667px;width:58px">商城隐藏</div>
<svg class="ic" style="left:1601px;top:670px" width="19" height="19" viewBox="0 0 19 19"><path d="M9.5 1.6 H1.7 V17.8 H17.6 V10" fill="none" stroke="#45c3a2" stroke-width="1.4"/><path d="M7.3 11.8 L7.9 9.3 L16.1 1.1 Q16.7 0.6 17.3 1.1 L18.1 1.9 Q18.6 2.5 18.1 3.1 L9.9 11.3 Z" fill="none" stroke="#45c3a2" stroke-width="1.3" stroke-linejoin="round"/></svg>
<svg class="ic" style="left:1635px;top:669px" width="22" height="22" viewBox="0 0 22 22"><circle cx="11" cy="11" r="9.8" fill="none" stroke="#45c3a2" stroke-width="1.4"/><path d="M9 7 V15 M13 7 V15" stroke="#45c3a2" stroke-width="1.7"/></svg>
<svg class="ic" style="left:1665px;top:669px" width="22" height="22" viewBox="0 0 22 22"><circle cx="11" cy="11" r="9.8" fill="none" stroke="#45c3a2" stroke-width="1.4"/><path d="M7.2 7.2 L14.8 14.8 M14.8 7.2 L7.2 14.8" stroke="#45c3a2" stroke-width="1.5"/></svg>
<div class="ab" style="left:1695px;top:667px;width:106px">更新已买矿机时间</div>
<div class="ab" style="left:1808px;top:667px;width:58px">赠送矿机</div>
<div class="row s" style="top:717px"></div>
<svg style="position:absolute;left:230px;top:731px" width="51" height="47" viewBox="0 0 51 47"><path d="M1 26 L26 12 L50 26 L50 29 L26 46 L1 29Z" fill="#6a2ad0"/>
<path d="M1 26 L26 12 L50 26 L26 40Z" fill="#7f3ae2"/>
<path d="M7 7 L16 2 L25 7 L25 28 L16 33 L7 28Z" fill="#6a28d0"/><path d="M7 7 L16 2 L25 7 L16 12Z" fill="#4a18a8"/><path d="M16 12 L25 7 L25 28 L16 33Z" fill="#7d3ae8"/>
<g fill="#3a9af5"><circle cx="18" cy="14" r=".8"/><circle cx="21" cy="12.5" r=".8"/><circle cx="18" cy="18" r=".8"/><circle cx="21" cy="16.5" r=".8"/><circle cx="18" cy="22" r=".8"/><circle cx="21" cy="20.5" r=".8"/><circle cx="18" cy="26" r=".8"/><circle cx="21" cy="24.5" r=".8"/></g>
<g stroke="#3a1080" stroke-width="1"><path d="M8 10 L15 14 M8 14 L15 18 M8 18 L15 22 M8 22 L15 26"/></g>
<path d="M25 13 L30 10 L36 13 L36 20 L30 23 L25 20Z" fill="#7a36e0"/><ellipse cx="31" cy="7" rx="3.5" ry="3" fill="#c7a6ff"/>
<ellipse cx="35" cy="16" rx="2.2" ry="1.6" fill="#f5a030"/><ellipse cx="39" cy="19" rx="2.2" ry="1.6" fill="#f5a030"/>
<path d="M21 30 L30 25 L35 28 L26 33Z" fill="#d3b8ff"/></svg>
<div class="td" style="left:235.3px;top:743px">CHIA云矿机32T满存云算力</div>
<div class="td" style="left:378.6px;top:743px">2560 USDT</div>
<div class="td" style="left:481.20000000000005px;top:743px">0.0133 chia</div>
<div class="td" style="left:590.4px;top:743px">24</div>
<div class="td" style="left:686.5px;top:743px">1080</div>
<div class="td" style="left:767.5px;top:743px">1080</div>
<div class="td" style="left:856.6px;top:743px">960</div>
<div class="td" style="left:960px;top:743px">32</div>
<div class="td" style="left:1072px;top:743px">10</div>
<div class="td" style="left:1183.8px;top:743px">0 %</div>
<div class="td" style="left:1265.3px;top:743px">开启</div>
<div class="td" style="left:1331.6px;top:743px">显示</div>
<div class="ab" style="left:1534px;top:737px;width:58px">商城隐藏</div>
<svg class="ic" style="left:1601px;top:740px" width="19" height="19" viewBox="0 0 19 19"><path d="M9.5 1.6 H1.7 V17.8 H17.6 V10" fill="none" stroke="#45c3a2" stroke-width="1.4"/><path d="M7.3 11.8 L7.9 9.3 L16.1 1.1 Q16.7 0.6 17.3 1.1 L18.1 1.9 Q18.6 2.5 18.1 3.1 L9.9 11.3 Z" fill="none" stroke="#45c3a2" stroke-width="1.3" stroke-linejoin="round"/></svg>
<svg class="ic" style="left:1635px;top:739px" width="22" height="22" viewBox="0 0 22 22"><circle cx="11" cy="11" r="9.8" fill="none" stroke="#45c3a2" stroke-width="1.4"/><path d="M9 7 V15 M13 7 V15" stroke="#45c3a2" stroke-width="1.7"/></svg>
<svg class="ic" style="left:1665px;top:739px" width="22" height="22" viewBox="0 0 22 22"><circle cx="11" cy="11" r="9.8" fill="none" stroke="#45c3a2" stroke-width="1.4"/><path d="M7.2 7.2 L14.8 14.8 M14.8 7.2 L7.2 14.8" stroke="#45c3a2" stroke-width="1.5"/></svg>
<div class="ab" style="left:1695px;top:737px;width:106px">更新已买矿机时间</div>
<div class="ab" style="left:1808px;top:737px;width:58px">赠送矿机</div>
<div class="row" style="top:787px"></div>
<svg style="position:absolute;left:230px;top:796px" width="51" height="51" viewBox="0 0 51 51"><path d="M1 33 L26 18 L50 33 L50 36 L26 50 L1 36Z" fill="#6a2ad0"/>
<path d="M1 33 L26 18 L50 33 L26 47Z" fill="#7f3ae2"/>
<path d="M11 10 L23 3 L38 10 L38 30 L23 38 L11 30Z" fill="#7a38e8"/><path d="M11 10 L23 3 L38 10 L25 17Z" fill="#4a18a0"/>
<path d="M13 14 L22 19 L22 35 L13 30Z" fill="#1e0840"/><path d="M14 24 L16 21 L18 26 L21 23" stroke="#f5a030" stroke-width=".7" fill="none"/>
<g fill="#f5a030"><rect x="26" y="20" width="3.5" height="4.5" rx="1"/><rect x="32" y="17" width="3.5" height="4.5" rx="1"/><rect x="26" y="28" width="3.5" height="4.5" rx="1"/><rect x="32" y="25" width="3.5" height="4.5" rx="1"/></g>
<ellipse cx="24.5" cy="7" rx="7.5" ry="6" fill="#f5951f"/><path d="M22 5 h4 v4 h-4z" fill="none" stroke="#ffc36a" stroke-width=".7"/></svg>
<div class="td" style="left:235.3px;top:813px">CHIA云矿机64T满存云算力</div>
<div class="td" style="left:378.6px;top:813px">5120 USDT</div>
<div class="td" style="left:481.20000000000005px;top:813px">0.02665 chia</div>
<div class="td" style="left:590.4px;top:813px">24</div>
<div class="td" style="left:686.5px;top:813px">1080</div>
<div class="td" style="left:767.5px;top:813px">1080</div>
<div class="td" style="left:856.6px;top:813px">1920</div>
<div class="td" style="left:960px;top:813px">64</div>
<div class="td" style="left:1072px;top:813px">10</div>
<div class="td" style="left:1183.8px;top:813px">0 %</div>
<div class="td" style="left:1265.3px;top:813px">开启</div>
<div class="td" style="left:1331.6px;top:813px">显示</div>
<div class="ab" style="left:1534px;top:807px;width:58px">商城隐藏</div>
<svg class="ic" style="left:1601px;top:810px" width="19" height="19" viewBox="0 0 19 19"><path d="M9.5 1.6 H1.7 V17.8 H17.6 V10" fill="none" stroke="#45c3a2" stroke-width="1.4"/><path d="M7.3 11.8 L7.9 9.3 L16.1 1.1 Q16.7 0.6 17.3 1.1 L18.1 1.9 Q18.6 2.5 18.1 3.1 L9.9 11.3 Z" fill="none" stroke="#45c3a2" stroke-width="1.3" stroke-linejoin="round"/></svg>
<svg class="ic" style="left:1635px;top:809px" width="22" height="22" viewBox="0 0 22 22"><circle cx="11" cy="11" r="9.8" fill="none" stroke="#45c3a2" stroke-width="1.4"/><path d="M9 7 V15 M13 7 V15" stroke="#45c3a2" stroke-width="1.7"/></svg>
<svg class="ic" style="left:1665px;top:809px" width="22" height="22" viewBox="0 0 22 22"><circle cx="11" cy="11" r="9.8" fill="none" stroke="#45c3a2" stroke-width="1.4"/><path d="M7.2 7.2 L14.8 14.8 M14.8 7.2 L7.2 14.8" stroke="#45c3a2" stroke-width="1.5"/></svg>
<div class="ab" style="left:1695px;top:807px;width:106px">更新已买矿机时间</div>
<div class="ab" style="left:1808px;top:807px;width:58px">赠送矿机</div>
<div class="row s" style="top:857px"></div>
<svg style="position:absolute;left:230px;top:867px" width="51" height="50" viewBox="0 0 51 50"><path d="M1 31 L26 17 L50 31 L50 34 L26 49 L1 34Z" fill="#6a2ad0"/>
<path d="M1 31 L26 17 L50 31 L26 45Z" fill="#7f3ae2"/>
<g><path d="M5 10 L10 7 L15 10 L15 34 L10 37 L5 34Z" fill="#7a38e8"/><path d="M5 10 L10 7 L15 10 L10 13Z" fill="#4a18a0"/></g>
<g><path d="M12 6 L17 3 L22 6 L22 32 L17 35 L12 32Z" fill="#7a38e8"/><path d="M12 6 L17 3 L22 6 L17 9Z" fill="#4a18a0"/></g>
<g><path d="M19 2 L24 -1 L30 2 L30 26 L24 29 L19 26Z" fill="#8040ee"/><path d="M19 2 L24 -1 L30 2 L24 5Z" fill="#4a18a0"/></g>
<g fill="#f5a030"><circle cx="14" cy="17" r="1.2"/><circle cx="14" cy="22" r="1.2"/><circle cx="14" cy="27" r="1.2"/><circle cx="14" cy="31" r="1.2"/><circle cx="21" cy="13" r="1.2"/><circle cx="21" cy="18" r="1.2"/><circle cx="28" cy="9" r="1.2"/><circle cx="28" cy="14" r="1.2"/></g>
<path d="M22 22 L30 18 L37 22 L37 30 L29 34 L22 30Z" fill="#8a4ae8"/><path d="M27 36 L35 31 L38 33 L30 38Z" fill="#c9a8ff"/></svg>
<div class="td" style="left:235.3px;top:883px">CHIA云矿机128T满存云算力</div>
<div class="td" style="left:378.6px;top:883px">10240 USDT</div>
<div class="td" style="left:481.20000000000005px;top:883px">0.0533 chia</div>
<div class="td" style="left:590.4px;top:883px">24</div>
<div class="td" style="left:686.5px;top:883px">1080</div>
<div class="td" style="left:767.5px;top:883px">1080</div>
<div class="td" style="left:856.6px;top:883px">3840</div>
<div class="td" style="left:960px;top:883px">128</div>
<div class="td" style="left:1072px;top:883px">10</div>
<div class="td" style="left:1183.8px;top:883px">0 %</div>
<div class="td" style="left:1265.3px;top:883px">开启</div>
<div class="td" style="left:1331.6px;top:883px">显示</div>
<div class="ab" style="left:1534px;top:877px;width:58px">商城隐藏</div>
<svg class="ic" style="left:1601px;top:880px" width="19" height="19" viewBox="0 0 19 19"><path d="M9.5 1.6 H1.7 V17.8 H17.6 V10" fill="none" stroke="#45c3a2" stroke-width="1.4"/><path d="M7.3 11.8 L7.9 9.3 L16.1 1.1 Q16.7 0.6 17.3 1.1 L18.1 1.9 Q18.6 2.5 18.1 3.1 L9.9 11.3 Z" fill="none" stroke="#45c3a2" stroke-width="1.3" stroke-linejoin="round"/></svg>
<svg class="ic" style="left:1635px;top:879px" width="22" height="22" viewBox="0 0 22 22"><circle cx="11" cy="11" r="9.8" fill="none" stroke="#45c3a2" stroke-width="1.4"/><path d="M9 7 V15 M13 7 V15" stroke="#45c3a2" stroke-width="1.7"/></svg>
<svg class="ic" style="left:1665px;top:879px" width="22" height="22" viewBox="0 0 22 22"><circle cx="11" cy="11" r="9.8" fill="none" stroke="#45c3a2" stroke-width="1.4"/><path d="M7.2 7.2 L14.8 14.8 M14.8 7.2 L7.2 14.8" stroke="#45c3a2" stroke-width="1.5"/></svg>
<div class="ab" style="left:1695px;top:877px;width:106px">更新已买矿机时间</div>
<div class="ab" style="left:1808px;top:877px;width:58px">赠送矿机</div>
<div class="row" style="top:927px"></div>
<svg style="position:absolute;left:230px;top:937px" width="51" height="30" viewBox="0 0 51 30"><path d="M2 26 L23 14 L50 29 L50 31 L29 43 L2 31Z" fill="#6a2ad0"/>
<path d="M4 13 L13 8 L22 13 L22 30 L13 35 L4 30Z" fill="#5a22c0"/>
<path d="M13 8 L22 13 L22 30 L13 35Z" fill="#7a36e0"/>
<path d="M14 7 L23 2 L31 7 L31 22 L23 27 L14 22Z" fill="#6a28d0"/>
<path d="M7.7 10 L13 7 L18.4 10 L13 13Z" fill="#8a4af0"/><path d="M16.6 4.5 L23 1 L29.4 4.5 L23 8Z" fill="#8a4af0"/>
<path d="M4 14 L13 19 L22 14 M4 19 L13 24 L22 19 M14 10 L23 15 L31 10" fill="none" stroke="#3a3040" stroke-width="1.1"/>
<path d="M33.9 3.8 L45.7 10.8 L45.7 19.9 L33.9 12.9Z" fill="#9a64f0"/><path d="M35 6 L44.5 11.5 L44.5 18 L35 12.5Z" fill="#7a40d8"/></svg>
<div class="td" style="left:235.3px;top:953px">CHIA云矿机256T满存云算力</div>
<div class="td" style="left:378.6px;top:953px">20480 USDT</div>
<div class="td" style="left:481.20000000000005px;top:953px">0.10665 chia</div>
<div class="td" style="left:590.4px;top:953px">24</div>
<div class="td" style="left:686.5px;top:953px">1080</div>
<div class="td" style="left:767.5px;top:953px">1080</div>
<div class="td" style="left:856.6px;top:953px">7680</div>
<div class="td" style="left:960px;top:953px">256</div>
<div class="td" style="left:1072px;top:953px">10</div>
<div class="td" style="left:1183.8px;top:953px">0 %</div>
<div class="td" style="left:1265.3px;top:953px">开启</div>
<div class="td" style="left:1331.6px;top:953px">显示</div>
<div class="ab" style="left:1534px;top:947px;width:58px">商城隐藏</div>
<svg class="ic" style="left:1601px;top:950px" width="19" height="19" viewBox="0 0 19 19"><path d="M9.5 1.6 H1.7 V17.8 H17.6 V10" fill="none" stroke="#45c3a2" stroke-width="1.4"/><path d="M7.3 11.8 L7.9 9.3 L16.1 1.1 Q16.7 0.6 17.3 1.1 L18.1 1.9 Q18.6 2.5 18.1 3.1 L9.9 11.3 Z" fill="none" stroke="#45c3a2" stroke-width="1.3" stroke-linejoin="round"/></svg>
<svg class="ic" style="left:1635px;top:949px" width="22" height="22" viewBox="0 0 22 22"><circle cx="11" cy="11" r="9.8" fill="none" stroke="#45c3a2" stroke-width="1.4"/><path d="M9 7 V15 M13 7 V15" stroke="#45c3a2" stroke-width="1.7"/></svg>
<svg class="ic" style="left:1665px;top:949px" width="22" height="22" viewBox="0 0 22 22"><circle cx="11" cy="11" r="9.8" fill="none" stroke="#45c3a2" stroke-width="1.4"/><path d="M7.2 7.2 L14.8 14.8 M14.8 7.2 L7.2 14.8" stroke="#45c3a2" stroke-width="1.5"/></svg>
<div class="ab" style="left:1695px;top:947px;width:106px">更新已买矿机时间</div>
<div class="ab" style="left:1808px;top:947px;width:58px">赠送矿机</div>
</body></html>
